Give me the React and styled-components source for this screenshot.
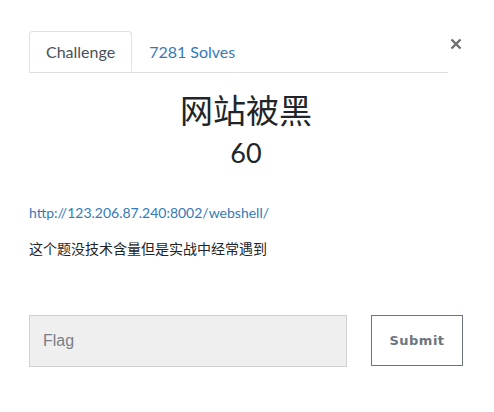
import React from "react";
import styled, { createGlobalStyle } from "styled-components";

const Global = createGlobalStyle`
  html, body { margin: 0; padding: 0; background: #fff; }
  body { font-family: Lato, "Noto Sans CJK SC", sans-serif; color: #212529; }
  * { box-sizing: border-box; }
`;

const Modal = styled.div`
  width: 494px;
  height: 412px;
  padding: 31px 31px 0 29px;
`;

const Header = styled.div`
  display: flex;
  align-items: flex-start;
`;

const Tabs = styled.ul`
  list-style: none;
  margin: 0;
  padding: 0;
  display: flex;
  width: 420px;
  border-bottom: 1px solid #dee2e6;
`;

const Tab = styled.li`
  height: 41px;
  margin-bottom: ${(p) => (p.$active ? "-1px" : "0")};
  padding: 0 16px;
  display: flex;
  align-items: center;
  font-size: 16px;
  color: ${(p) => (p.$active ? "#495057" : "#337ab7")};
  border: 1px solid ${(p) => (p.$active ? "#dee2e6" : "transparent")};
  border-bottom-color: ${(p) => (p.$active ? "#fff" : "transparent")};
  border-radius: 4px 4px 0 0;
  background: ${(p) => (p.$active ? "#fff" : "transparent")};
`;

const Close = styled.button`
  margin-left: 1px;
  margin-top: 3px;
  width: 14px;
  height: 20px;
  padding: 0;
  border: 0;
  background: none;
  display: flex;
  align-items: center;
  justify-content: center;
`;

const Title = styled.h2`
  margin: 17px 0 0;
  text-align: center;
  font-size: 33px;
  font-weight: 400;
  line-height: 40px;
`;

const Points = styled.h3`
  margin: 6px 0 0;
  text-align: center;
  font-size: 27px;
  font-weight: 400;
  line-height: 34px;
`;

const Desc = styled.div`
  margin-top: 33px;
  font-size: 14px;
  line-height: 20px;
  display: flex;
  flex-direction: column;
  gap: 16px;
`;

const Link = styled.a`
  color: #337ab7;
  text-decoration: none;
`;

const Form = styled.div`
  margin-top: 56px;
  display: flex;
  gap: 24px;
`;

const Input = styled.input`
  width: 318px;
  height: 52px;
  background: #efefef;
  border: 1px solid #cfcfcf;
  padding: 0 13px;
  font-family: "Liberation Sans", Arial, sans-serif;
  font-size: 16px;
  color: #6c757d;
  outline: none;
  &::placeholder { color: #7a7f85; }
`;

const Submit = styled.button`
  width: 92px;
  height: 51px;
  background: #fff;
  border: 1px solid #6c757d;
  font-family: "DejaVu Sans", sans-serif;
  font-weight: 700;
  font-size: 13px;
  letter-spacing: 0.5px;
  color: #6c757d;
`;

export default function App() {
  return (
    <Modal>
      <Global />
      <Header>
        <Tabs>
          <Tab $active>Challenge</Tab>
          <Tab>7281 Solves</Tab>
        </Tabs>
        <Close aria-label="close">
          <svg width="12" height="12" viewBox="0 0 12 12">
            <path d="M1.5 1.5 L10.5 10.5 M10.5 1.5 L1.5 10.5" stroke="#6f6f6f" strokeWidth="2.4" />
          </svg>
        </Close>
      </Header>
      <Title>网站被黑</Title>
      <Points>60</Points>
      <Desc>
        <Link href="#">http://123.206.87.240:8002/webshell/</Link>
        <span>这个题没技术含量但是实战中经常遇到</span>
      </Desc>
      <Form>
        <Input placeholder="Flag" />
        <Submit>Submit</Submit>
      </Form>
    </Modal>
  );
}
